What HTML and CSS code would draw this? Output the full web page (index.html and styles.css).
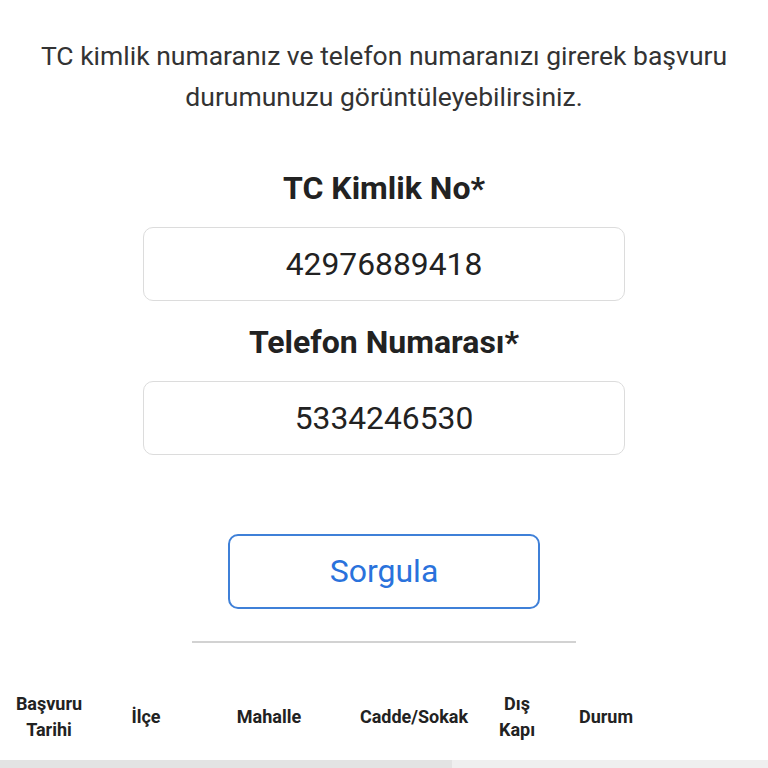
FILE: index.html
```html
<!DOCTYPE html>
<html lang="tr">
<head>
<meta charset="utf-8">
<title>Başvuru Sorgulama</title>
<link rel="stylesheet" href="styles.css">
</head>
<body>
<main class="page">
  <p class="intro">TC kimlik numaranız ve telefon numaranızı girerek başvuru durumunuzu görüntüleyebilirsiniz.</p>
  <form class="form">
    <label class="label label-first" for="tc">TC Kimlik No*</label>
    <input class="field" id="tc" type="text" value="42976889418">
    <label class="label label-second" for="tel">Telefon Numarası*</label>
    <input class="field" id="tel" type="text" value="5334246530">
    <button class="btn" type="button">Sorgula</button>
  </form>
  <hr class="divider">
  <div class="table-head">
    <div class="th c1">Başvuru<br>Tarihi</div>
    <div class="th c2">İlçe</div>
    <div class="th c3">Mahalle</div>
    <div class="th c4">Cadde/Sokak</div>
    <div class="th c5">Dış<br>Kapı</div>
    <div class="th c6">Durum</div>
  </div>
  <div class="scrollbar"><div class="thumb"></div></div>
</main>
</body>
</html>
```
FILE: styles.css
```css
html, body {
  margin: 0;
  padding: 0;
  background: #ffffff;
}
body {
  font-family: Roboto, "Noto Sans", "Liberation Sans", sans-serif;
  color: #222;
}
.page {
  width: 768px;
  height: 768px;
  overflow: hidden;
  display: flex;
  flex-direction: column;
}
.intro {
  margin: 35px 10px 0;
  font-size: 26.5px;
  line-height: 41px;
  color: #333;
  text-align: center;
}
.form {
  display: flex;
  flex-direction: column;
  align-items: center;
}
.label {
  font-size: 32px;
  font-weight: 700;
  line-height: 40px;
  color: #222;
}
.label-first {
  margin-top: 51px;
  margin-bottom: 19px;
}
.label-second {
  margin-top: 21px;
  margin-bottom: 19px;
}
.field {
  box-sizing: border-box;
  width: 482px;
  height: 74px;
  border: 1.5px solid #dcdcdc;
  border-radius: 10px;
  background: #fff;
  font-family: Roboto, "Noto Sans", sans-serif;
  font-size: 31.8px;
  color: #222;
  text-align: center;
  outline: none;
  padding: 0 12px;
}
.btn {
  box-sizing: border-box;
  margin-top: 79px;
  width: 312px;
  height: 75px;
  border: 2px solid #3f80d8;
  border-radius: 10px;
  background: #fff;
  color: #2a72dc;
  font-family: Roboto, "Noto Sans", sans-serif;
  font-size: 32px;
  padding: 0 0 1px;
}
.divider {
  width: 384px;
  margin: 32px auto 0;
  border: 0;
  border-top: 2px solid #d2d2d2;
}
.table-head {
  margin-top: 36px;
  display: grid;
  grid-template-columns: 98px 96px 150px 140px 66px 112px;
  align-items: center;
  height: 80px;
}
.th {
  font-size: 18px;
  font-weight: 700;
  line-height: 26px;
  text-align: center;
  color: #222;
}
.scrollbar {
  margin-top: 6px;
  height: 8px;
  background: #efefef;
  display: flex;
}
.thumb {
  width: 452px;
  background: #e3e3e3;
}
```
